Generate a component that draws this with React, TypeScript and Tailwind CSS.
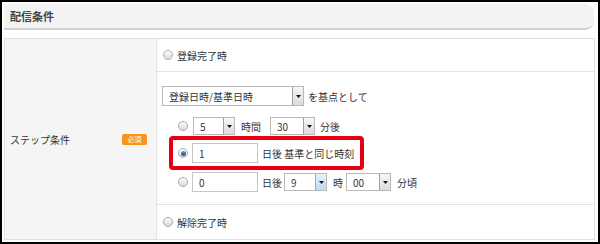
import React from "react"

const jp = { fontFamily: '"Noto Sans CJK JP", "Noto Sans", sans-serif' }

function Radio({ checked = false }: { checked?: boolean }) {
    return (
        <span className="inline-flex items-center justify-center w-[10px] h-[10px] rounded-full border border-[#a9a9a9] bg-gradient-to-b from-[#ffffff] to-[#d9d9d9] shrink-0">
            {checked && <span className="w-[5px] h-[5px] rounded-full bg-gradient-to-b from-[#5a9bd6] to-[#1c4f80]" />}
        </span>
    )
}

function Select({ value, width, height = 18, active = false }: { value: string, width: number, height?: number, active?: boolean }) {
    return (
        <div className="flex items-stretch bg-white border border-[#b9b9b9] shrink-0" style={{ width, height }}>
            <span className="flex-1 flex items-center pl-[6px] text-[#333]">{value}</span>
            <span className={"w-[11px] flex items-center justify-center border-l " + (active ? "border-[#7eb4ea] bg-gradient-to-b from-[#e6f2fc] to-[#bcdcf5]" : "border-[#a0a0a0] bg-gradient-to-b from-[#f7f7f7] to-[#dcdcdc]")}>
                <svg width="5" height="3" viewBox="0 0 5 3"><path d="M0 0h5L2.5 3z" fill="#111" /></svg>
            </span>
        </div>
    )
}

function Input({ value }: { value: string }) {
    return (
        <div className="w-[66px] h-[20px] flex items-center pl-[6px] bg-white border border-[#c6c6c6] text-[#333] shrink-0">{value}</div>
    )
}

export default function App() {
    return (
        <div className="w-[600px] h-[244px] border-2 border-black bg-white text-[10px] text-[#333] overflow-hidden" style={jp}>
            <div className="ml-[2px] mr-[4px] mt-[2px] h-[26px] bg-[#f3f3f3] border-b-2 border-[#d2d2d2] rounded-r-[9px] flex items-center pl-[6px]">
                <span className="text-[11px] font-bold text-[#444]">配信条件</span>
            </div>
            <div className="ml-[2px] mr-[3px] mt-[8px] h-[202px] border border-[#e0e0e0] flex">
                <div className="w-[152px] bg-[#f4f5f4] border-r border-[#e3e3e3] flex items-center pl-[5px]">
                    <span className="flex-1">ステップ条件</span>
                    <span className="mr-[9px] w-[25px] h-[11px] rounded-[2px] bg-[#f7941d] text-white text-[7px] leading-none flex items-center justify-center">必須</span>
                </div>
                <div className="flex-1 flex flex-col">
                    <div className="h-[33px] flex items-center gap-[4px] pl-[6px] border-b border-[#e3e3e3]">
                        <Radio />
                        <span>登録完了時</span>
                    </div>
                    <div className="h-[133px] border-b border-[#e3e3e3] pl-[5px] pt-[14px]">
                        <div className="flex items-center gap-[4px]">
                            <Select value="登録日時/基準日時" width={142} height={20} />
                            <span>を基点として</span>
                        </div>
                        <div className="ml-[16px] mt-[11px] h-[18px] flex items-center">
                            <Radio />
                            <span className="ml-[5px]"><Select value="5" width={42} /></span>
                            <span className="ml-[6px] w-[29px]">時間</span>
                            <Select value="30" width={45} />
                            <span className="ml-[5px]">分後</span>
                        </div>
                        <div className="ml-[7px] mt-[1px] w-[195px] h-[34px] border-4 border-[#e60012] rounded-[4px] flex items-center pl-[5px]">
                            <Radio checked />
                            <span className="ml-[4px]"><Input value="1" /></span>
                            <span className="ml-[4px]">日後 基準と同じ時刻</span>
                        </div>
                        <div className="ml-[16px] mt-[2px] h-[20px] flex items-center">
                            <Radio />
                            <span className="ml-[4px]"><Input value="0" /></span>
                            <span className="ml-[4px] w-[22px]">日後</span>
                            <Select value="9" width={43} active />
                            <span className="ml-[6px] w-[13px]">時</span>
                            <Select value="00" width={45} />
                            <span className="ml-[6px]">分頃</span>
                        </div>
                    </div>
                    <div className="flex-1 flex items-center gap-[4px] pl-[6px]">
                        <Radio />
                        <span>解除完了時</span>
                    </div>
                </div>
            </div>
        </div>
    )
}
